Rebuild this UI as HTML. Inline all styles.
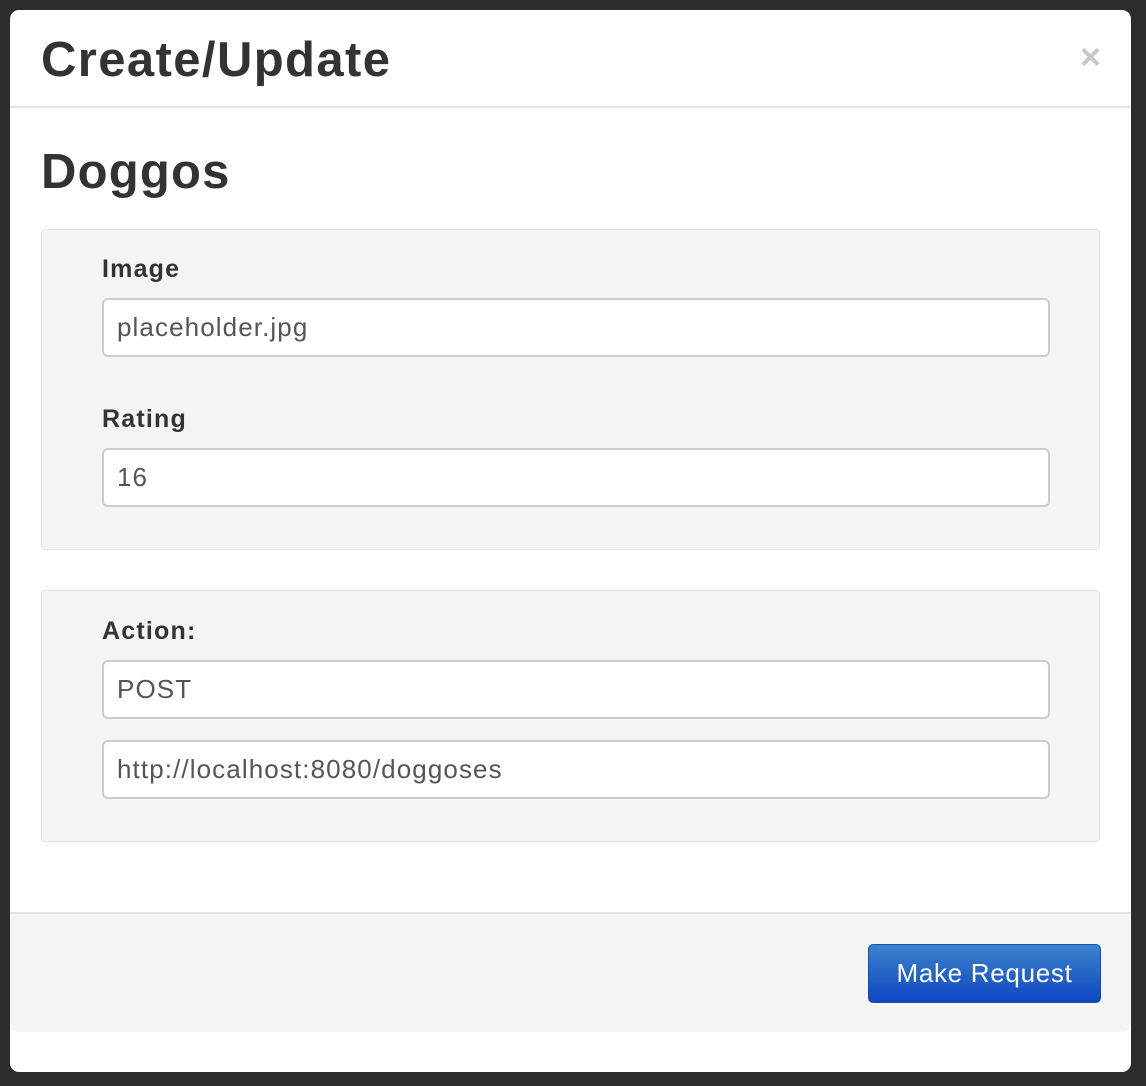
<!DOCTYPE html>
<html><head><meta charset="utf-8"><style>
html,body{margin:0;padding:0;}
body{width:1146px;height:1086px;background:#2c2c2c;position:relative;overflow:hidden;font-family:"Liberation Sans",Arial,sans-serif;color:#333;}
.modal{position:absolute;left:10px;top:10px;width:1121px;height:1062px;background:#fff;border-radius:9px;overflow:hidden;}
.hdr{position:absolute;left:0;top:0;width:100%;height:96px;border-bottom:2px solid #e5e5e5;}
.hdr h1{position:absolute;left:31px;top:22px;margin:0;font-size:49px;letter-spacing:1.4px;font-weight:bold;line-height:56px;color:#333;}
.close{position:absolute;right:30px;top:30px;font-size:36px;font-weight:bold;color:#c8c8c8;line-height:34px;}
h2{position:absolute;left:31px;top:134px;margin:0;font-size:49px;letter-spacing:1.2px;font-weight:bold;line-height:56px;}
.well{position:absolute;left:31px;width:1057px;background:#f4f4f4;border:1px solid #e2e2e2;border-radius:4px;}
label{position:absolute;left:60px;font-size:25px;letter-spacing:1.2px;font-weight:bold;}
.inp{position:absolute;left:60px;width:948px;height:59px;background:#fff;border:2px solid #ccc;border-radius:6px;box-sizing:border-box;font-size:26px;letter-spacing:1.1px;color:#555;padding-left:13px;line-height:55px;}
.foot{position:absolute;left:0;top:902px;width:100%;height:118px;background:#f4f4f4;border-top:2px solid #e2e2e2;border-radius:0 0 9px 9px;}
.btn{position:absolute;left:858px;top:30px;width:233px;height:59px;border-radius:5px;background:linear-gradient(#3b83cc,#0f46c4);border:1px solid #1450b0;box-sizing:border-box;color:#fff;font-size:26px;letter-spacing:0.7px;text-align:center;line-height:57px;}
</style></head><body>
<div class="modal">
 <div class="hdr"><h1>Create/Update</h1><div class="close">×</div></div>
 <h2>Doggos</h2>
 <div class="well" style="top:219px;height:319px;">
  <label style="top:25px;">Image</label>
  <div class="inp" style="top:68px;">placeholder.jpg</div>
  <label style="top:175px;">Rating</label>
  <div class="inp" style="top:218px;">16</div>
 </div>
 <div class="well" style="top:580px;height:250px;">
  <label style="top:26px;">Action:</label>
  <div class="inp" style="top:69px;">POST</div>
  <div class="inp" style="top:149px;">http://localhost:8080/doggoses</div>
 </div>
 <div class="foot"><div class="btn">Make Request</div></div>
</div>
</body></html>
